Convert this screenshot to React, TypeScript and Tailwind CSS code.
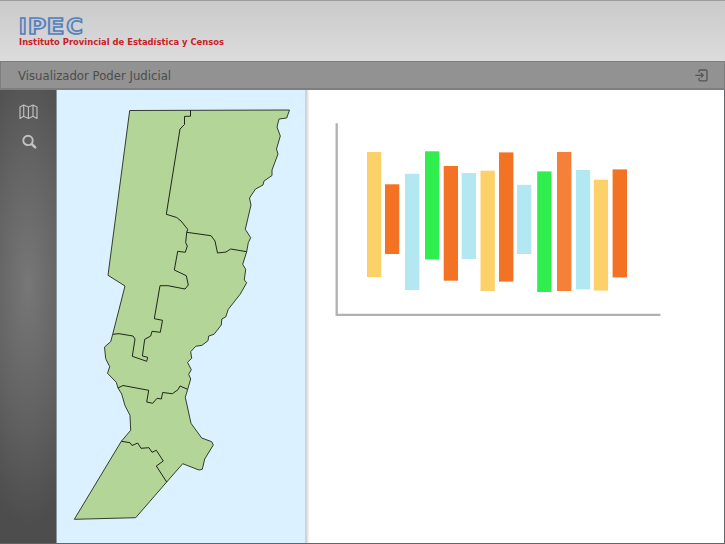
import React from 'react';

type Bar = { x: number; y: number; width: number; bottom: number; color: string };

const bars: Bar[] = [
  { x: 367, y: 152, width: 14.3, bottom: 277, color: '#fcd169' },
  { x: 385, y: 184.3, width: 14.3, bottom: 254, color: '#f47223' },
  { x: 405, y: 173.8, width: 14.4, bottom: 290, color: '#b3e8f2' },
  { x: 425, y: 151.3, width: 14.3, bottom: 259.4, color: '#2fee4d' },
  { x: 443.7, y: 166, width: 14.3, bottom: 280.7, color: '#f47223' },
  { x: 461.7, y: 173, width: 14.3, bottom: 259, color: '#b3e8f2' },
  { x: 480.5, y: 170.7, width: 14.3, bottom: 291, color: '#fcd169' },
  { x: 499, y: 152.4, width: 14.4, bottom: 281.6, color: '#f47223' },
  { x: 517, y: 184.8, width: 14.3, bottom: 254, color: '#b3e8f2' },
  { x: 537.2, y: 171.4, width: 14.3, bottom: 292, color: '#2fee4d' },
  { x: 557, y: 152, width: 14.4, bottom: 291, color: '#f48039' },
  { x: 575.9, y: 170, width: 14.3, bottom: 289.4, color: '#b3e8f2' },
  { x: 593.8, y: 179.7, width: 14.3, bottom: 290.6, color: '#fcd169' },
  { x: 612.6, y: 169.4, width: 14.4, bottom: 277.4, color: '#f47223' },
];

const province =
  '129.7,110.5 289.5,110 286.7,118 279,119 277,127 280.3,136 276.5,149 278,154 272,170 272,175.5 264,181 263,185 255.5,189 249.5,198 251,205 245.3,229.3 250.7,237.7 248.3,242.7 246.7,251.7 242.7,264.3 245.7,269.3 244.3,280 246.7,282.7 240.3,294 228.3,309.3 225.7,317 221.8,319 221.3,325 214,334.3 208.7,336 208,340.7 202,345.3 195.7,346.3 190.7,351.7 191.7,358.3 187.5,362.3 191.3,369.7 188.7,374.3 190.7,379 187.7,389.3 185.3,397.3 191,423.3 201.7,438 211.7,441.7 213.3,445 204.7,459 202.3,469.3 199,470 182.7,463.7 166.7,482 135.7,517.7 74.3,519.3 121.3,441.3 130.7,430.3 130,415.3 125,405.7 121.7,394 118,388 116.3,382.3 107.5,373.3 109.7,366.7 105.7,358.7 104.5,347 110.7,341.7 112.7,334.3 125,286 108,275.3';

const borders = [
  '190.5,110 190.5,116.2 184.5,116.4 184.5,124.5 180,129 166.3,214.3 176.7,217.5 181,221 187.7,229.3 186.7,232.3 185.7,242.7 187.3,246 185.3,252.3 177.7,251.3 174.3,270 186.3,275.7 188.3,285 185,289 168,285.7 160,285.7 154.3,318.7 162.5,320.3 160.3,332.3 152,331.3 150.7,336 144.7,339.3 142.4,356 147.7,357.3 146.7,361.3 132.3,356.3 135,339 133,336 119,333.7 112.7,334.3',
  '186.7,232.3 211,235.7 215,241 217.5,253 226,252 230.7,249 246.7,251.7',
  '118,388 123,385.5 148.7,390.3 146.7,402 152.7,403.3 157,398.3 161.3,399 162.7,392.5 172.3,393.7 178,389.7 180,386 187.7,389.3',
  '121.3,441.3 130,442.7 132,445.5 137.7,443 141,448.3 149,447.7 152,452.3 156.3,450.3 163.3,461 156.3,466 166.7,482',
];

function Header() {
  return (
    <header className="h-[61px] shrink-0 border-t border-[#9c9c9c] bg-linear-to-b from-[#cacaca] to-[#dcdcdc] pl-[16px] pt-[8px]">
      <svg width="80" height="32" viewBox="16 9 80 32" className="block overflow-visible" aria-label="IPEC">
        <g
          fill="#c5cad2"
          stroke="#5580bb"
          strokeWidth="1.6"
          fontSize="21.6"
          fontWeight="700"
          fontFamily="'DejaVu Sans', Verdana, sans-serif"
        >
          <text x="18.8" y="33.7">I</text>
          <text x="27.7" y="33.7" textLength="18.5" lengthAdjust="spacingAndGlyphs">P</text>
          <text x="46.5" y="33.7" textLength="18" lengthAdjust="spacingAndGlyphs">E</text>
          <text x="66.2" y="33.7" textLength="16.6" lengthAdjust="spacingAndGlyphs">C</text>
        </g>
      </svg>
      <p className="-mt-[5px] ml-[3px] whitespace-nowrap font-['DejaVu_Sans',Verdana,sans-serif] text-[8.42px] font-bold leading-[12px] text-[#cb2027]">
        Instituto Provincial de Estadística y Censos
      </p>
    </header>
  );
}

function TitleBar() {
  return (
    <div className="flex h-[29px] shrink-0 items-center justify-between border border-b-2 border-[#7e7e7e] bg-[#929292] pl-[17px] pr-[16px]">
      <h1 className="mt-px whitespace-nowrap font-['DejaVu_Sans',Verdana,sans-serif] text-[11.7px] leading-4 text-[#4c4c4c]">
        Visualizador Poder Judicial
      </h1>
      <svg width="13" height="13" viewBox="0 0 13 13" fill="none" stroke="#555" strokeWidth="1.3">
        <path d="M4 3.6V2.2Q4 1 5.2 1H10.8Q12 1 12 2.2V10.5Q12 11.8 10.8 11.8H5.2Q4 11.8 4 10.5V9" />
        <path d="M0.3 6.3H8M5.8 4L8.2 6.3L5.8 8.6" />
      </svg>
    </div>
  );
}

function Sidebar() {
  return (
    <nav className="flex w-[57px] shrink-0 flex-col items-center gap-[14px] border-r border-[#8b969d] bg-[radial-gradient(ellipse_65px_240px_at_50%_43%,#777_0%,#626262_55%,#4d4d4d_100%)] pl-px pt-[14px]">
      <svg width="19" height="16" viewBox="0 0 19 16" fill="none" stroke="#bdbdbd" strokeWidth="1.2" strokeLinejoin="round">
        <path d="M1 3L4.7 1L9.4 3L14 1L18 3V14.5L14 12.3L9.4 14.5L4.7 12.3L1 14.5ZM4.7 1V12.3M9.4 3V14.5M14 1V12.3" />
      </svg>
      <svg width="16" height="16" viewBox="0 0 16 16" fill="none" stroke="#c2c2c2" strokeLinecap="round">
        <circle cx="7" cy="6.4" r="4.7" strokeWidth="1.9" />
        <path d="M10.7 10L14.2 13.4" strokeWidth="2.5" />
      </svg>
    </nav>
  );
}

function ProvinceMap() {
  return (
    <section className="w-[248px] shrink-0 bg-[#dbf1ff]">
      <svg width="248" height="453" viewBox="57 90 248 453" className="block" strokeLinejoin="round">
        <polygon points={province} fill="#b3d597" stroke="#353c2f" strokeWidth="1" />
        {borders.map((points) => (
          <polyline key={points} points={points} fill="none" stroke="#202719" strokeWidth="1" />
        ))}
      </svg>
    </section>
  );
}

function BarChart() {
  return (
    <section className="flex-1 bg-[linear-gradient(to_right,#cddbe3_0px,#cbcbcb_1px,#dcdcdc_2px,#ededed_3px,#fff_5px)]">
      <svg width="419" height="453" viewBox="305 90 419 453" className="block">
        <path d="M336.7 123.3V314.8H660.4" fill="none" stroke="#b1b1b1" strokeWidth="2.3" />
        {bars.map((bar) => (
          <rect key={bar.x} x={bar.x} y={bar.y} width={bar.width} height={bar.bottom - bar.y} fill={bar.color} />
        ))}
      </svg>
    </section>
  );
}

export default function App() {
  return (
    <div className="flex h-[544px] w-[725px] flex-col overflow-hidden bg-white">
      <Header />
      <TitleBar />
      <main className="flex h-[454px] border-b border-r border-[#62666a]">
        <Sidebar />
        <ProvinceMap />
        <BarChart />
      </main>
    </div>
  );
}
